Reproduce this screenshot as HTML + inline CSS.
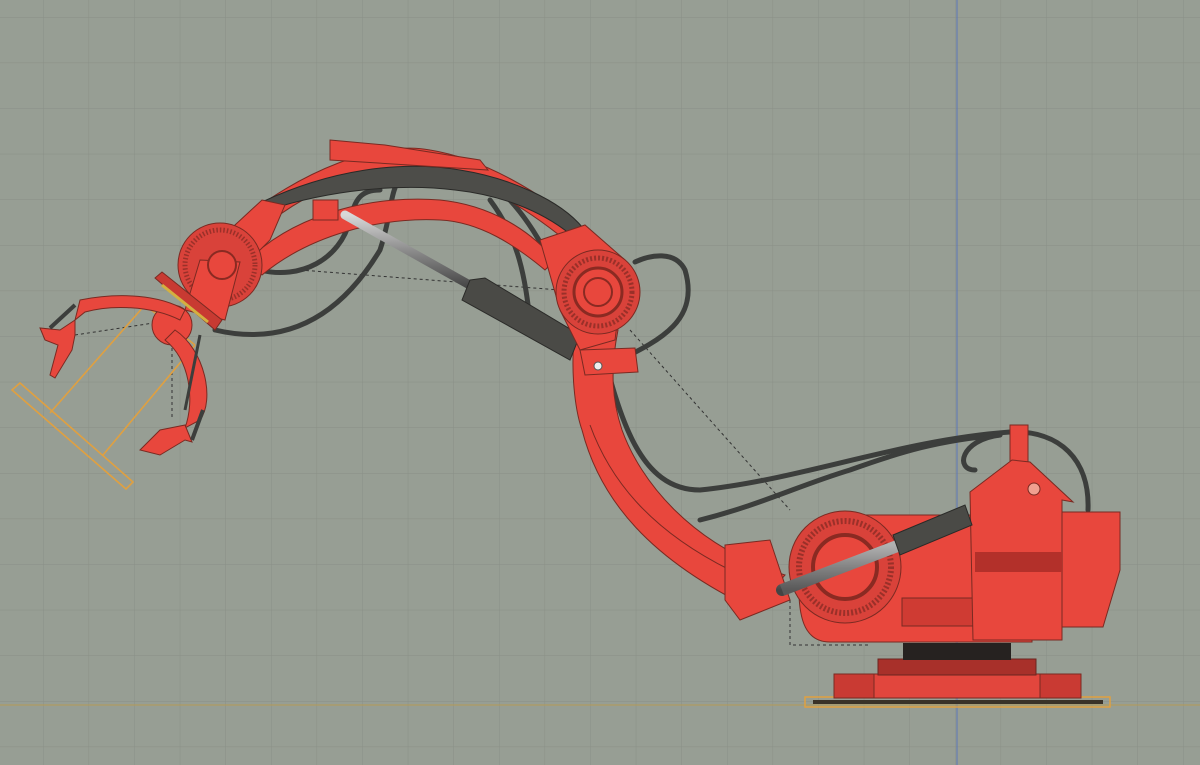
<!DOCTYPE html>
<html><head><meta charset="utf-8"><style>
html,body{margin:0;padding:0;background:#979e94;}
svg{display:block}
</style></head><body>
<svg width="1200" height="765" viewBox="0 0 1200 765" xmlns="http://www.w3.org/2000/svg">
<defs>
<pattern id="g" width="45.6" height="45.6" patternUnits="userSpaceOnUse" x="43" y="17">
<path d="M0 0H45.6M0 0V45.6" stroke="#898f86" stroke-width="1" fill="none"/>
</pattern>
<linearGradient id="rod" x1="0" y1="0" x2="0" y2="1"><stop offset="0" stop-color="#d8d8d8"/><stop offset=".5" stop-color="#8a8a8a"/><stop offset="1" stop-color="#444"/></linearGradient>
</defs>
<rect width="1200" height="765" fill="#979e94"/>
<rect width="1200" height="765" fill="url(#g)"/>
<line x1="957" y1="0" x2="957" y2="765" stroke="#5b76b8" stroke-width="1"/>
<line x1="0" y1="705" x2="1200" y2="705" stroke="#b59a55" stroke-width="1"/>

<g stroke="#333" stroke-width="1" stroke-dasharray="3,3" fill="none">
<path d="M75 335 L160 322"/><path d="M172 330 L172 420"/>
<path d="M300 270 L560 290"/><path d="M630 330 L790 510"/>
<path d="M790 600 L790 645 L870 645"/>
</g>

<g stroke="#e0a040" stroke-width="1.6" fill="none">
<path d="M12 390 L20 383 L133 482 L126 489 Z"/>
<path d="M50 413 L145 305"/><path d="M103 455 L195 345"/><path d="M145 305 L195 345"/>
</g>

<g stroke="#3c3e3c" stroke-width="5" fill="none" stroke-linecap="round">
<path d="M260 270 C300 280 340 260 350 220 C355 200 360 190 380 190"/>
<path d="M215 330 C300 350 350 300 380 250 C390 220 390 200 395 188"/>
<path d="M490 200 C520 240 525 280 530 320"/>
<path d="M505 195 C540 230 560 280 580 330"/>
<path d="M620 360 C660 340 700 320 685 270 C675 250 650 255 635 262"/>
<path d="M600 340 C620 420 640 490 700 490 C800 480 900 440 1010 432 C1060 430 1090 460 1088 510"/>
<path d="M700 520 C760 505 800 485 850 470 C900 452 940 440 1000 435"/>
<path d="M1000 435 C960 440 955 470 975 470"/>
</g>

<rect x="805" y="697" width="305" height="10" fill="none" stroke="#e0a040" stroke-width="1.5"/>
<rect x="813" y="700" width="290" height="4" fill="#3a3228"/>
<rect x="834" y="674" width="247" height="24" fill="#e2463d" stroke="#7a2a22"/>
<rect x="834" y="674" width="40" height="24" fill="#c93a33" stroke="#7a2a22"/>
<rect x="1040" y="674" width="41" height="24" fill="#c93a33" stroke="#7a2a22"/>
<rect x="878" y="659" width="158" height="16" fill="#a8302a" stroke="#6a2520"/>
<rect x="903" y="643" width="108" height="17" fill="#262220"/>

<path d="M800 560 C800 520 830 515 850 515 L975 515 L975 598 L1032 598 L1032 642 L830 642 C805 642 795 620 800 560Z" fill="#e8473d" stroke="#7a2a22"/>
<rect x="902" y="598" width="130" height="28" fill="#cf3b33" stroke="#7a2a22"/>
<path d="M1062 512 L1120 512 L1120 570 L1103 627 L1062 627 Z" fill="#e8473d" stroke="#7a2a22"/>
<rect x="1010" y="425" width="18" height="40" fill="#e8473d" stroke="#7a2a22"/>
<path d="M970 492 L1012 460 L1030 462 L1073 502 L1062 500 L1062 640 L973 640 Z" fill="#e8473d" stroke="#7a2a22"/>
<rect x="975" y="552" width="87" height="20" fill="#b3302a"/>
<circle cx="1034" cy="489" r="6" fill="#f0a090" stroke="#7a2a22"/>

<!-- upper arm (narrower) -->
<path d="M575 330 C570 370 575 410 582 430 C600 500 650 560 755 610 L785 575 C690 545 640 480 622 430 C612 400 610 370 618 330 Z" fill="#e8473d" stroke="#7a2a22"/>
<path d="M590 425 C610 480 650 530 730 570" stroke="#7a2a22" fill="none"/>
<path d="M725 545 L770 540 L790 600 L740 620 L725 600 Z" fill="#e8473d" stroke="#7a2a22"/>
<path d="M580 350 L635 348 L638 372 L585 375 Z" fill="#e8473d" stroke="#7a2a22"/>

<circle cx="845" cy="567" r="56" fill="#d9423a" stroke="#7a2a22"/>
<circle cx="845" cy="567" r="46" fill="none" stroke="#9a3029" stroke-width="6" stroke-dasharray="2,2"/>
<circle cx="845" cy="567" r="32" fill="#e8473d" stroke="#8a2a22" stroke-width="4"/>
<line x1="782" y1="590" x2="900" y2="545" stroke="url(#rod)" stroke-width="12" stroke-linecap="round"/>
<line x1="782" y1="590" x2="900" y2="545" stroke="#777" stroke-width="12" stroke-opacity=".4"/>
<path d="M893 535 L965 505 L972 525 L900 555 Z" fill="#4a4a46" stroke="#2a2a28"/>

<path d="M235 225 C300 170 380 140 430 150 C480 158 540 190 590 235 L575 248 C530 210 480 178 430 172 C370 165 300 190 250 240 Z" fill="#e8473d" stroke="#7a2a22"/>
<path d="M262 202 C330 170 400 160 460 170 C510 178 560 200 583 228 L570 234 C540 210 500 195 455 190 C400 183 330 190 268 210 Z" fill="#4d4d49" stroke="#2a2a28"/>
<path d="M248 260 C300 210 380 195 440 200 C490 205 530 230 555 260 L545 270 C515 245 480 222 440 220 C380 217 310 235 262 275 Z" fill="#e8473d" stroke="#7a2a22"/>
<path d="M330 140 L385 145 L480 160 L488 170 L330 160 Z" fill="#e8473d" stroke="#7a2a22"/>
<rect x="313" y="200" width="25" height="20" fill="#e8473d" stroke="#7a2a22"/>
<line x1="345" y1="215" x2="475" y2="288" stroke="url(#rod)" stroke-width="9" stroke-linecap="round"/>
<path d="M470 280 L485 278 L580 335 L570 360 L462 300 Z" fill="#4a4a46" stroke="#2a2a28"/>
<path d="M540 240 L585 225 L625 260 L615 340 L580 350 L560 310 Z" fill="#e8473d" stroke="#7a2a22"/>
<circle cx="598" cy="292" r="42" fill="#d9423a" stroke="#7a2a22"/>
<circle cx="598" cy="292" r="34" fill="none" stroke="#9a3029" stroke-width="5" stroke-dasharray="2,2"/>
<circle cx="598" cy="292" r="24" fill="#e8473d" stroke="#8a2a22" stroke-width="3"/>
<circle cx="598" cy="292" r="14" fill="#e8473d" stroke="#8a2a22" stroke-width="2"/>
<circle cx="598" cy="366" r="4" fill="#eee" stroke="#555"/>

<path d="M235 225 L262 200 L285 205 L270 240 L245 265 Z" fill="#e8473d" stroke="#7a2a22"/>
<circle cx="220" cy="265" r="42" fill="#d9423a" stroke="#7a2a22"/>
<circle cx="220" cy="265" r="35" fill="none" stroke="#9a3029" stroke-width="5" stroke-dasharray="1.5,2"/>
<path d="M200 260 L240 262 L225 320 L185 310 Z" fill="#e8473d" stroke="#7a2a22"/>
<circle cx="222" cy="265" r="14" fill="#e8473d" stroke="#8a2a22" stroke-width="2"/>
<path d="M155 278 L162 272 L222 320 L215 330 Z" fill="#c83a32" stroke="#7a2a22"/>
<path d="M162 285 L208 322" stroke="#d4b040" stroke-width="3"/>
<circle cx="172" cy="325" r="20" fill="#e8473d" stroke="#7a2a22"/>

<path d="M80 300 C120 292 160 295 185 310 L180 320 C150 305 110 305 85 312 L75 320 Z" fill="#e8473d" stroke="#7a2a22"/>
<path d="M75 320 L60 330 L40 328 L45 340 L58 345 L50 375 L55 378 L72 350 L75 335 Z" fill="#e8473d" stroke="#7a2a22"/>
<line x1="50" y1="328" x2="75" y2="305" stroke="#3c3e3c" stroke-width="4"/>
<path d="M175 330 C205 350 215 400 200 420 L185 428 C195 400 190 360 165 340 Z" fill="#e8473d" stroke="#7a2a22"/>
<path d="M185 425 L160 430 L140 450 L160 455 L185 440 L192 442 Z" fill="#e8473d" stroke="#7a2a22"/>
<line x1="192" y1="440" x2="203" y2="410" stroke="#3c3e3c" stroke-width="4"/>
<line x1="185" y1="410" x2="200" y2="335" stroke="#3c3e3c" stroke-width="3"/>
</svg>
</body></html>
